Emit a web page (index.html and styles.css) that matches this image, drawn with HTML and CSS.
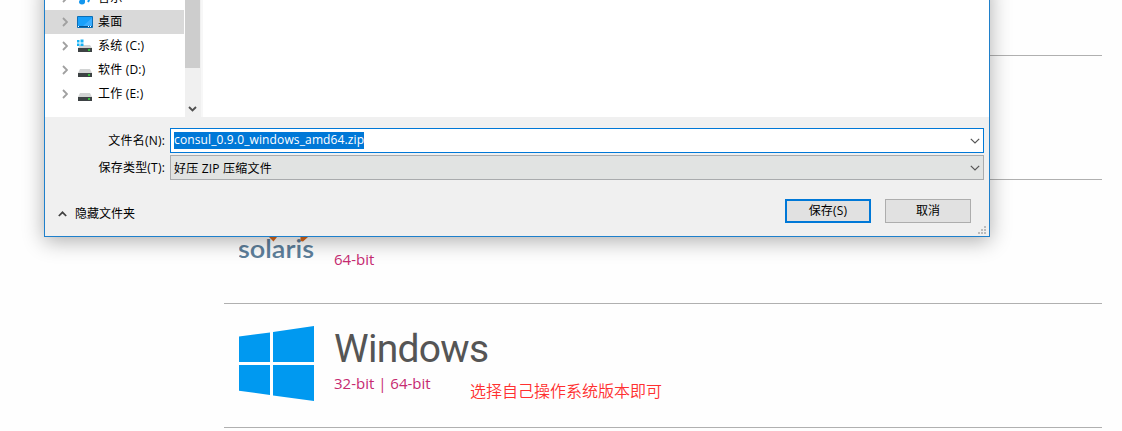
FILE: index.html
```html
<!DOCTYPE html>
<html lang="zh-CN">
<head>
<meta charset="utf-8">
<title>Downloads</title>
<link rel="stylesheet" href="styles.css">
</head>
<body>
<main class="downloads">
  <section class="row row-first"></section>
  <section class="row"></section>
  <section class="row solaris">
    <svg class="logo" width="76" height="76" viewBox="0 0 76 76">
      <text class="wordmark" x="-1" y="56" textLength="76" lengthAdjust="spacingAndGlyphs">solaris</text>
      <path d="M27 30L37 30L38 35L34.5 39.5L30 35ZM59 30H70L69 35L64 39.5L61.5 39V35Z" fill="#d9681c"/>
    </svg>
    <div class="info"><h2></h2><p>64-bit</p></div>
  </section>
  <section class="row windows">
    <svg class="logo" width="76" height="76" viewBox="0 0 76 76">
      <path d="M0 10.5L31 6.4V36H0ZM34 6L75 0V36H34ZM0 39H31V69L0 64.7ZM34 39H75V75L34 69.4Z" fill="#0099f0"/>
    </svg>
    <div class="info"><h2>Windows</h2><p>32-bit | 64-bit</p></div>
    <div class="note">选择自己操作系统版本即可</div>
  </section>
</main>

<div class="dialog">
  <div class="browser">
    <ul class="tree">
      <li><svg class="chev" width="6" height="10" viewBox="0 0 6 10"><path d="M1 1L5 5L1 9"/></svg>
        <svg class="ico" width="16" height="16" viewBox="0 0 16 16"><path d="M7 2V12M7 3Q8 6 11 7Q13 9 11 12" fill="none" stroke="#1296ee" stroke-width="2"/><ellipse cx="5" cy="12" rx="3" ry="2.4" fill="#1296ee"/></svg><span>音乐</span></li>
      <li class="selected"><svg class="chev" width="6" height="10" viewBox="0 0 6 10"><path d="M1 1L5 5L1 9"/></svg>
        <svg class="ico" width="16" height="16" viewBox="0 0 16 16"><path d="M.5 2.5H15.5V13.5H.5Z" fill="#18a0fb" stroke="#0c6eb5"/><path d="M6 12L15 4V12Z" fill="#3badff"/><path d="M1 12.5H15" stroke="#07518c"/><path d="M1 12.5H2M11 12.5H12M13 12.5H14" stroke="#fff"/></svg><span>桌面</span></li>
      <li><svg class="chev" width="6" height="10" viewBox="0 0 6 10"><path d="M1 1L5 5L1 9"/></svg>
        <svg class="ico" width="16" height="16" viewBox="0 0 16 16"><path d="M3 7H13L15 10H1Z" fill="#d2d4d4"/><path d="M1 10H15V14H1Z" fill="#3d4244"/><path d="M11 12H13" stroke="#35e43b" stroke-width="1.5"/><path d="M0 2H2.5V4.5H0ZM3.5 1.5H6.5V4.5H3.5ZM0 5.5H2.5V8H0ZM3.5 5.5H6.5V8H3.5Z" fill="#16b2f4"/></svg><span>系统 (C:)</span></li>
      <li><svg class="chev" width="6" height="10" viewBox="0 0 6 10"><path d="M1 1L5 5L1 9"/></svg>
        <svg class="ico" width="16" height="16" viewBox="0 0 16 16"><path d="M3 7H13L15 11H1Z" fill="#d2d4d4"/><path d="M1 11H15V15H1Z" fill="#3d4244"/><path d="M11 13H13" stroke="#35e43b" stroke-width="1.5"/></svg><span>软件 (D:)</span></li>
      <li><svg class="chev" width="6" height="10" viewBox="0 0 6 10"><path d="M1 1L5 5L1 9"/></svg>
        <svg class="ico" width="16" height="16" viewBox="0 0 16 16"><path d="M3 7H13L15 11H1Z" fill="#d2d4d4"/><path d="M1 11H15V15H1Z" fill="#3d4244"/><path d="M11 13H13" stroke="#35e43b" stroke-width="1.5"/></svg><span>工作 (E:)</span></li>
    </ul>
    <div class="scrollbar"><div class="thumb"></div><svg width="9" height="6" viewBox="0 0 9 6"><path d="M1 1L4.5 4.5L8 1" fill="none" stroke="#505050" stroke-width="1.9"/></svg></div>
    <div class="files"></div>
  </div>
  <div class="form">
    <label>文件名(N):</label>
    <div class="combo name"><span class="filename">consul_0.9.0_windows_amd64.zip</span><svg class="drop" width="10" height="6" viewBox="0 0 10 6"><path d="M.8 .8L5 5L9.2 .8"/></svg></div>
    <label>保存类型(T):</label>
    <div class="combo type"><span>好压 ZIP 压缩文件</span><svg class="drop" width="10" height="6" viewBox="0 0 10 6"><path d="M.8 .8L5 5L9.2 .8"/></svg></div>
  </div>
  <div class="actions">
    <div class="toggle"><svg width="9" height="6" viewBox="0 0 9 6"><path d="M.8 5L4.5 1.3L8.2 5" fill="none" stroke="#404040" stroke-width="1.7"/></svg><span>隐藏文件夹</span></div>
    <button class="save">保存(S)</button>
    <button>取消</button>
  </div>
  <svg class="grip" width="8" height="8" viewBox="0 0 8 8"><path d="M6 0h2v2h-2zM3 3h2v2h-2zM6 3h2v2h-2zM0 6h2v2h-2zM3 6h2v2h-2zM6 6h2v2h-2z" fill="#bcbcbc"/></svg>
</div>
</body>
</html>
```
FILE: styles.css
```css
* { box-sizing: border-box; }
body {
  margin: 0;
  height: 431px;
  position: relative;
  overflow: hidden;
  background: #fefefe;
  font-family: "Open Sans", "Noto Sans CJK SC", sans-serif;
}
.downloads { margin-left: 224px; width: 878px; }
.row {
  height: 124px;
  display: flex;
  padding: 22px 0 0 15px;
  border-bottom: 1px solid #b0b0b0;
}
.row-first { height: 56px; }
.logo { flex: none; margin-right: 19px; }
.wordmark { font: 600 25px "Lato", sans-serif; fill: #5d7f9b; }
.info { width: 136px; }
.info h2 {
  margin: 0;
  height: 45px;
  font: 400 39px/46px "Roboto", sans-serif;
  letter-spacing: -.7px;
  color: #555;
}
.info p {
  margin: 0;
  font-size: 15px;
  line-height: 24px;
  white-space: nowrap;
  color: #c62a71;
}
.note {
  padding-top: 52px;
  font: 350 16px/24px "Noto Sans CJK SC", sans-serif;
  color: #ff3030;
}
.dialog {
  position: absolute;
  left: 44px;
  top: -20px;
  width: 946px;
  height: 257px;
  border: 1px solid #1f80cb;
  background: #f0f0f0;
  box-shadow: 0 4px 20px rgba(0, 0, 0, .32);
  font-size: 12px;
  color: #000;
}
.browser { height: 136px; display: flex; overflow: hidden; }
.tree {
  width: 140px;
  margin: 0;
  padding: 5px 1px 0 0;
  list-style: none;
  background: #fff;
}
.tree li {
  height: 24px;
  padding-left: 17px;
  display: flex;
  align-items: center;
  white-space: pre;
}
.tree span { padding-bottom: 2px; letter-spacing: .2px; }
.tree .selected { background: #d9d9d9; }
.chev { margin-right: 9px; fill: none; stroke: #a0a0a0; stroke-width: 1.8; }
.ico { margin-right: 5px; }
.scrollbar {
  width: 16px;
  display: flex;
  flex-direction: column;
  align-items: flex-start;
  justify-content: space-between;
  padding-bottom: 5px;
  background: #f0f0f0;
}
.scrollbar svg { margin-left: 3px; }
.thumb { width: 15px; height: 87px; background: #cdcdcd; }
.files { flex: 1; background: #fff; border-left: 2px solid #f7f7f7; }
.form {
  display: grid;
  grid-template-columns: 120px 814px;
  grid-template-rows: 26px 25px;
  column-gap: 5px;
  row-gap: 1px;
  padding-top: 11px;
}
label {
  text-align: right;
  line-height: 25px;
  letter-spacing: .2px;
  white-space: nowrap;
}
.combo {
  display: flex;
  align-items: center;
  justify-content: space-between;
  padding: 0 3px;
  border: 1px solid #a9abad;
  background: #e1e3e2;
}
.combo.name { height: 25px; background: #fff; border-color: #0078d7; }
.combo.type span { letter-spacing: .2px; }
.filename {
  height: 17px;
  line-height: 16px;
  letter-spacing: .13px;
  background: #0078d7;
  color: #fff;
}
.drop { fill: none; stroke: #555; stroke-width: 1.2; }
.actions {
  display: flex;
  padding: 19px 18px 0 13px;
  gap: 14px;
}
.toggle {
  flex: 1;
  display: flex;
  align-items: center;
  gap: 8px;
  height: 29px;
}
.toggle span { padding-bottom: 1px; }
button {
  width: 86px;
  height: 24px;
  padding: 0;
  border: 1px solid #adadad;
  background: #e1e1e1;
  font: inherit;
  line-height: 20px;
  color: #000;
}
.save { border: 2px solid #0078d7; letter-spacing: .2px; }
.grip { position: absolute; right: 3px; bottom: 2px; }
```
